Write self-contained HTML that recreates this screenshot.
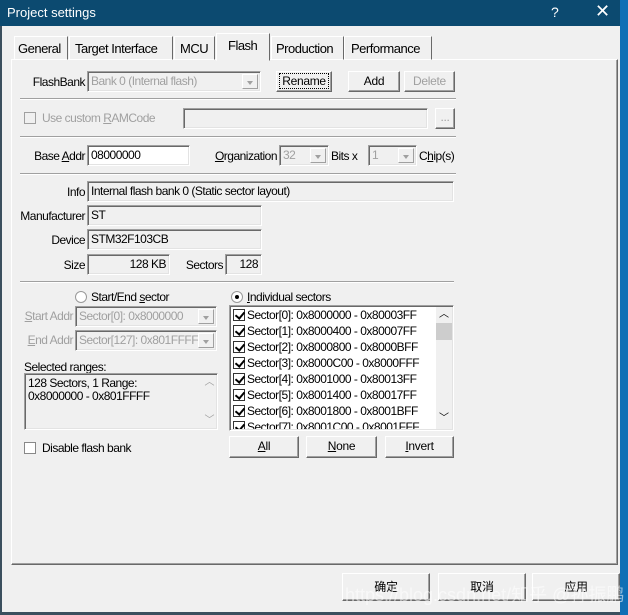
<!DOCTYPE html>
<html><head><meta charset="utf-8"><style>
*{margin:0;padding:0;box-sizing:border-box}
body{width:628px;height:615px;background:#f0f0f0;font-family:"Liberation Sans","Noto Sans CJK SC",sans-serif;font-size:12px;color:#000;position:relative;overflow:hidden}
.a{position:absolute;white-space:nowrap}
.t{position:absolute;white-space:nowrap;line-height:14px;letter-spacing:-0.5px}
.r{position:absolute;white-space:nowrap;line-height:14px;letter-spacing:-0.5px;text-align:right}
.g{color:#a0a0a0}
.sunk{position:absolute;background:#fff;border:1px solid;border-color:#a0a0a0 #fff #fff #a0a0a0;box-shadow:inset 1px 1px 0 #696969,inset -1px -1px 0 #e3e3e3;padding:3px 3px;line-height:13px;letter-spacing:-0.5px;white-space:nowrap;overflow:hidden}
.dis{background:#f0f0f0}
.btn{position:absolute;background:#f0f0f0;border:1px solid;border-color:#fff #696969 #696969 #fff;box-shadow:inset -1px -1px 0 #a0a0a0;text-align:center;line-height:18px;letter-spacing:-0.3px}
.sep{position:absolute;height:2px;border-top:1px solid #a0a0a0;border-bottom:1px solid #fff}
.dd{position:absolute;right:2px;top:2px;bottom:2px;width:16px;background:#f0f0f0;border:1px solid;border-color:#fff #a0a0a0 #a0a0a0 #fff}
.dd:after{content:"";position:absolute;left:4px;top:6px;border-left:3.5px solid transparent;border-right:3.5px solid transparent;border-top:4px solid #a0a0a0}
.cb{position:absolute;width:12px;height:12px;background:#fff;border:1px solid #777}
.ck{position:absolute;width:12px;height:12px;background:#fff;border:1px solid #333}
.ck:after{content:"";position:absolute;left:3px;top:0px;width:4px;height:7px;border:solid #000;border-width:0 2px 2px 0;transform:rotate(40deg)}
u{text-decoration:underline}
</style></head><body>
<div class="a" style="left:0;top:0;width:628px;height:26px;background:#0c4a70"></div>
<div class="a" style="left:7px;top:5px;color:#fff;font-size:13px">Project settings</div>
<div class="a" style="left:551px;top:4px;color:#fff;font-size:14px">?</div>
<div class="a" style="left:595px;top:1px;color:#fff;font-size:18px;font-weight:lighter">✕</div>
<div class="a" style="left:0;top:26px;width:2px;height:589px;background:#3b4f5e"></div>
<div class="a" style="left:620px;top:0;width:8px;height:615px;background:#0f6fb5"></div>
<div class="a" style="left:0;top:612px;width:620px;height:3px;background:#3b4f5e"></div>

<div class="a" style="left:11px;top:59px;width:607px;height:506px;border:1px solid;border-color:#fff #696969 #696969 #fff;box-shadow:inset -1px -1px 0 #a0a0a0"></div>
<div class="a" style="left:14px;top:36px;width:54px;height:24px;border:1px solid;border-color:#fff #696969 transparent #fff"></div><div class="t" style="left:18px;top:42px;font-size:13px">General</div>
<div class="a" style="left:69px;top:36px;width:104px;height:24px;border:1px solid;border-color:#fff #696969 transparent #fff"></div><div class="t" style="left:75px;top:42px;font-size:13px">Target Interface</div>
<div class="a" style="left:174px;top:36px;width:41px;height:24px;border:1px solid;border-color:#fff #696969 transparent #fff"></div><div class="t" style="left:180px;top:42px;font-size:13px">MCU</div>
<div class="a" style="left:216px;top:33px;width:54px;height:28px;background:#f0f0f0;border:1px solid;border-color:#fff #696969 transparent #fff"></div><div class="t" style="left:228px;top:39px;font-size:13px">Flash</div>
<div class="a" style="left:271px;top:36px;width:73px;height:24px;border:1px solid;border-color:#fff #696969 transparent #fff"></div><div class="t" style="left:276px;top:42px;font-size:13px">Production</div>
<div class="a" style="left:344px;top:36px;width:88px;height:24px;border:1px solid;border-color:#fff #696969 transparent #fff"></div><div class="t" style="left:351px;top:42px;font-size:13px">Performance</div>

<div class="r" style="right:543px;top:75px">FlashBank</div>
<div class="sunk dis g" style="left:87px;top:71px;width:174px;height:21px">Bank 0 (Internal flash)<div class="dd"></div></div>
<div class="btn" style="left:276px;top:71px;width:56px;height:21px"><span style="outline:1px dotted #000;padding:0 2px">Rename</span></div>
<div class="btn" style="left:348px;top:71px;width:52px;height:21px">Add</div>
<div class="btn g" style="left:404px;top:71px;width:51px;height:21px">Delete</div>
<div class="sep" style="left:20px;top:98px;width:436px"></div>
<div class="cb" style="left:24px;top:112px;border-color:#a0a0a0;background:#f0f0f0"></div>
<div class="t g" style="left:42px;top:111px">Use custom <u>R</u>AMCode</div>
<div class="sunk dis" style="left:183px;top:108px;width:245px;height:21px"></div>
<div class="btn g" style="left:435px;top:108px;width:20px;height:21px;line-height:16px">...</div>
<div class="sep" style="left:20px;top:136px;width:436px"></div>
<div class="r" style="right:543px;top:149px">Base <u>A</u>ddr</div>
<div class="sunk" style="left:87px;top:145px;width:103px;height:21px">08000000</div>
<div class="r" style="right:351px;top:149px"><u>O</u>rganization</div>
<div class="sunk dis g" style="left:279px;top:145px;width:50px;height:21px">32<div class="dd"></div></div>
<div class="t" style="left:331px;top:149px">Bits x</div>
<div class="sunk dis g" style="left:368px;top:145px;width:49px;height:21px">1<div class="dd"></div></div>
<div class="t" style="left:419px;top:149px">C<u>h</u>ip(s)</div>
<div class="sep" style="left:20px;top:173px;width:436px"></div>

<div class="r" style="right:543px;top:185px">Info</div>
<div class="sunk dis" style="left:87px;top:181px;width:367px;height:21px">Internal flash bank 0 (Static sector layout)</div>
<div class="r" style="right:543px;top:209px">Manufacturer</div>
<div class="sunk dis" style="left:87px;top:205px;width:175px;height:21px">ST</div>
<div class="r" style="right:543px;top:233px">Device</div>
<div class="sunk dis" style="left:87px;top:229px;width:175px;height:21px">STM32F103CB</div>
<div class="r" style="right:543px;top:258px">Size</div>
<div class="sunk dis" style="left:87px;top:254px;width:83px;height:21px;text-align:right">128 KB</div>
<div class="r" style="right:405px;top:258px">Sectors</div>
<div class="sunk dis" style="left:225px;top:254px;width:37px;height:21px;text-align:right">128</div>
<div class="sep" style="left:20px;top:281px;width:434px"></div>

<div class="cb" style="left:75px;top:291px;border-radius:50%;border-color:#999"></div>
<div class="t" style="left:91px;top:290px">Start/End <u>s</u>ector</div>
<div class="cb" style="left:231px;top:291px;border-radius:50%;border-color:#999"></div>
<div class="a" style="left:235px;top:295px;width:4px;height:4px;border-radius:50%;background:#000"></div>
<div class="t" style="left:247px;top:290px"><u>I</u>ndividual sectors</div>
<div class="r g" style="right:555px;top:309px"><u>S</u>tart Addr</div>
<div class="sunk dis g" style="left:75px;top:306px;width:142px;height:21px">Sector[0]: 0x8000000<div class="dd"></div></div>
<div class="r g" style="right:555px;top:333px"><u>E</u>nd Addr</div>
<div class="sunk dis g" style="left:75px;top:330px;width:142px;height:21px">Sector[127]: 0x801FFFF<div class="dd"></div></div>
<div class="t" style="left:24px;top:360px">Selected ranges:</div>
<div class="sunk dis" style="left:24px;top:373px;width:194px;height:57px;line-height:13px;padding:3px">128 Sectors, 1 Range:<br>0x8000000 - 0x801FFFF
<div class="a g" style="right:3px;top:2px;font-size:10px">︿</div><div class="a g" style="right:3px;bottom:2px;font-size:10px">﹀</div></div>
<div class="sunk" style="left:229px;top:305px;width:225px;height:126px;padding:0">
<div class="a" style="left:206px;top:1px;width:16px;height:122px;background:#f0f0f0"></div>
<div class="a" style="left:206px;top:17px;width:16px;height:17px;background:#cdcdcd"></div>
<div class="a" style="left:209px;top:2px;font-size:10px">︿</div><div class="a" style="left:209px;top:106px;font-size:10px">﹀</div>
</div>
<div class="a" style="left:231px;top:307px;width:204px;height:122px;overflow:hidden">
<div class="ck" style="left:2px;top:2px"></div><div class="ck" style="left:2px;top:18px"></div><div class="ck" style="left:2px;top:34px"></div><div class="ck" style="left:2px;top:50px"></div><div class="ck" style="left:2px;top:66px"></div><div class="ck" style="left:2px;top:82px"></div><div class="ck" style="left:2px;top:98px"></div><div class="ck" style="left:2px;top:114px"></div>
<div class="t" style="left:16px;top:0;line-height:16px">
Sector[0]: 0x8000000 - 0x80003FF<br>Sector[1]: 0x8000400 - 0x80007FF<br>Sector[2]: 0x8000800 - 0x8000BFF<br>Sector[3]: 0x8000C00 - 0x8000FFF<br>Sector[4]: 0x8001000 - 0x80013FF<br>Sector[5]: 0x8001400 - 0x80017FF<br>Sector[6]: 0x8001800 - 0x8001BFF<br>Sector[7]: 0x8001C00 - 0x8001FFF</div></div>
<div class="cb" style="left:24px;top:442px;border-color:#888"></div>
<div class="t" style="left:42px;top:441px">Disable flash bank</div>
<div class="btn" style="left:229px;top:436px;width:70px;height:22px"><u>A</u>ll</div>
<div class="btn" style="left:306px;top:436px;width:71px;height:22px"><u>N</u>one</div>
<div class="btn" style="left:385px;top:436px;width:69px;height:22px"><u>I</u>nvert</div>

<div class="btn" style="left:342px;top:573px;width:88px;height:28px;line-height:26px">确定</div>
<div class="btn" style="left:438px;top:573px;width:88px;height:28px;line-height:26px">取消</div>
<div class="btn" style="left:532px;top:573px;width:88px;height:28px;line-height:26px">应用</div>
<div class="a" style="left:345px;top:581px;font-size:18px;color:rgba(255,255,255,0.55)">https://blog.csdn.net/知乎 @孙振鹏</div>
</body></html>
